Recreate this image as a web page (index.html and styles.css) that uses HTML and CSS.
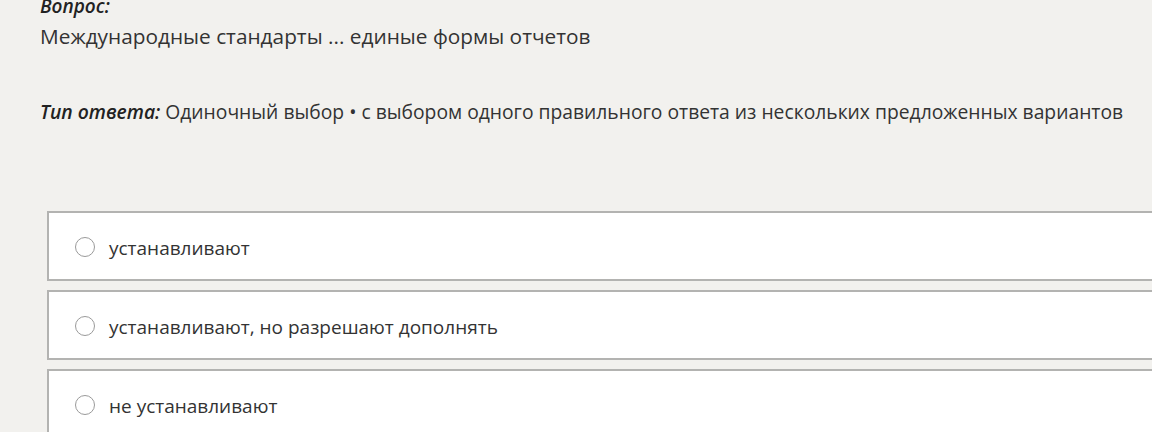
FILE: index.html
```html
<!DOCTYPE html>
<html lang="ru">
<head>
    <meta charset="UTF-8">
    <title>Вопрос</title>
    <link rel="stylesheet" href="styles.css">
</head>
<body>
    <div class="page">
        <div class="question-head">
            <div class="caption">Вопрос:</div>
            <div class="question-text">Международные стандарты ... единые формы отчетов</div>
        </div>

        <div class="answer-type">
            <span class="caption">Тип ответа:</span> Одиночный выбор • с выбором одного правильного ответа из нескольких предложенных вариантов
        </div>

        <!-- варианты ответа -->
        <div class="options">
            <label class="option">
                <span class="radio"></span>
                <span>устанавливают</span>
            </label>
            <label class="option">
                <span class="radio"></span>
                <span>устанавливают, но разрешают дополнять</span>
            </label>
            <label class="option">
                <span class="radio"></span>
                <span>не устанавливают</span>
            </label>
        </div>
    </div>
</body>
</html>
```

FILE: styles.css
```css
body {
    margin: 0;
    background-color: #f2f1ee;
    font-family: "Open Sans", "Liberation Sans", sans-serif;
    color: #333;
    overflow: hidden;
}

.page {
    padding-left: 40px;
    margin-top: -9px;
}

.caption {
    font-style: italic;
    font-weight: 600;
    color: #222;
}

.question-head {
    font-size: 20.8px;
    line-height: 30px;
}

.question-head .caption {
    font-size: 19px;
}

.answer-type {
    margin-top: 47px;
    font-size: 19.3px;
    line-height: 28px;
}

.options {
    margin-top: 85px;
    margin-left: 7px;
    margin-right: -60px;
    display: flex;
    flex-direction: column;
    gap: 9px;
}

.option {
    display: flex;
    align-items: center;
    gap: 14px;
    height: 66px;
    padding: 3px 0 0 26px;
    box-sizing: content-box;
    height: 63px;
    background-color: #fff;
    border: 2px solid #b3b3b1;
    font-size: 19px;
}

.radio {
    width: 18px;
    height: 18px;
    margin-top: -2px;
    border: 1.5px solid #9a9a9a;
    border-radius: 50%;
    flex-shrink: 0;
}
```
